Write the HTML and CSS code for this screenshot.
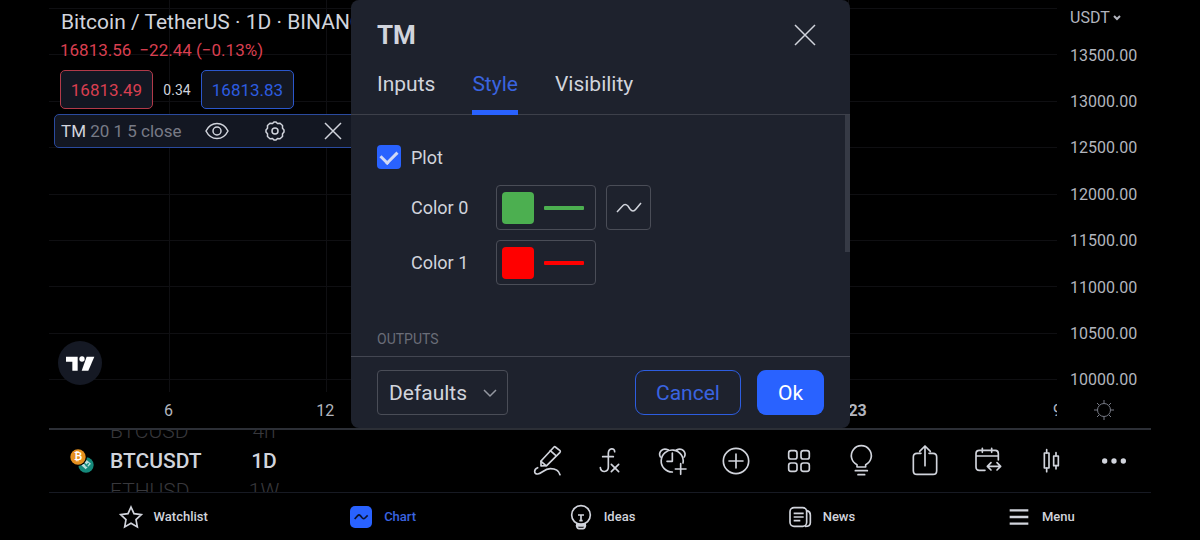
FILE: index.html
```html
<!DOCTYPE html>
<html lang="en">
<head>
    <meta charset="UTF-8">
    <meta name="viewport" content="width=device-width, initial-scale=1.0">
    <title>BTCUSDT Chart</title>
    <link rel="stylesheet" href="styles.css">
</head>
<body>
    <div class="app">
        <main class="chart">
            <div class="plot">
                <div class="grid-cols"><i></i><i></i><i></i><i></i><i class="month-end"></i><i class="month-start"></i></div>
                <div class="grid-rows"><i></i><i></i><i></i><i></i><i></i><i></i><i></i><i></i></div>

                <div class="legend">
                    <div class="symbol-title">Bitcoin / TetherUS · 1D · BINANCE</div>
                    <div class="last-price"><span>16813.56</span><span>−22.44 (−0.13%)</span></div>
                    <div class="trade">
                        <button class="trade-btn sell">16813.49</button>
                        <span class="spread">0.34</span>
                        <button class="trade-btn buy">16813.83</button>
                    </div>
                    <div class="indicator">
                        <span class="indicator-name">TM <span class="indicator-args">20 1 5 close</span></span>
                        <button class="indicator-btn" aria-label="Hide">
                            <svg width="24" height="24" viewBox="0 0 24 24"><path d="M1 12C6 2 18 2 23 12C18 22 6 22 1 12Z"/><circle cx="12" cy="12" r="4"/></svg>
                        </button>
                        <button class="indicator-btn" aria-label="Settings">
                            <svg width="24" height="24" viewBox="0 0 24 24"><path d="M9.5 4.5L11 3H13L14.5 4.5L17 4.3L19.5 6.500L19.500 9.200L21 11V13L19.500 14.800L19.500 17.500L17 19.700L14.500 19.500L13 21H11L9.500 19.500L7 19.700L4.500 17.500L4.500 14.800L3 13V11L4.500 9.200L4.500 6.500L7 4.300Z"/><circle cx="12" cy="12" r="3"/></svg>
                        </button>
                        <button class="indicator-btn" aria-label="Remove">
                            <svg width="24" height="24" viewBox="0 0 24 24"><path d="M4 4L20 20M20 4L4 20"/></svg>
                        </button>
                    </div>
                </div>

                <svg class="brand" viewBox="0 0 132 132" aria-label="TradingView">
                    <circle cx="66" cy="66" r="66" fill="#151924"/>
                    <path d="M24 47H59V89H43V62H24Z" fill="#fff"/>
                    <circle cx="72" cy="54" r="8" fill="#fff"/>
                    <path d="M86 47H109L91 89H71Z" fill="#fff"/>
                </svg>
            </div>

            <div class="price-axis">
                <div class="currency">
                    <select class="currency-select" aria-label="Currency"><option>USDT</option></select>
                    <svg width="8" height="6" viewBox="0 0 8 6"><path d="M1 1L4 4L7 1"/></svg>
                </div>
                <div class="prices">
                    <span>13500.00</span>
                    <span>13000.00</span>
                    <span>12500.00</span>
                    <span>12000.00</span>
                    <span>11500.00</span>
                    <span>11000.00</span>
                    <span>10500.00</span>
                    <span>10000.00</span>
                </div>
            </div>

            <div class="time-axis">
                <div class="dates">
                    <span>6</span><span>12</span><span></span><span></span><span class="year">2023</span><span>9</span>
                </div>
            </div>
            <button class="axis-settings" aria-label="Chart settings">
                <svg width="20" height="20" viewBox="0 0 20 20"><circle cx="10" cy="10" r="6.500"/><path d="M10 0V3M10 17V20M0 10H3M17 10H20M3 3L5 5M15 15L17 17M17 3L15 5M5 15L3 17"/></svg>
            </button>

            <section class="dialog" role="dialog" aria-label="TM">
                <header class="dialog-header">
                    <h1>TM</h1>
                    <button class="close-btn" aria-label="Close">
                        <svg width="22" height="22" viewBox="0 0 22 22"><path d="M1 1L21 21M21 1L1 21"/></svg>
                    </button>
                </header>
                <nav class="tabs">
                    <button class="tab">Inputs</button>
                    <button class="tab active">Style</button>
                    <button class="tab">Visibility</button>
                </nav>
                <div class="dialog-body">
                    <label class="plot-toggle"><input type="checkbox" class="checkbox" checked>Plot</label>
                    <div class="option">
                        <label for="color0">Color 0</label>
                        <button id="color0" class="color-btn green"><i class="swatch"></i><i class="line"></i></button>
                        <button class="line-type" aria-label="Line type">
                            <svg width="26" height="12" viewBox="0 0 26 12"><path d="M1 10L6.500 4Q9 1 12 4L14 7Q17 11 20 7L25 1"/></svg>
                        </button>
                    </div>
                    <div class="option">
                        <label for="color1">Color 1</label>
                        <button id="color1" class="color-btn red"><i class="swatch"></i><i class="line"></i></button>
                    </div>
                    <h2>OUTPUTS</h2>
                    <div class="scrollbar"></div>
                </div>
                <footer class="dialog-footer">
                    <div class="defaults">
                        <select class="defaults-select" aria-label="Defaults"><option>Defaults</option></select>
                        <svg width="14" height="8" viewBox="0 0 14 8"><path d="M1 1L7 7L13 1"/></svg>
                    </div>
                    <button class="btn cancel">Cancel</button>
                    <button class="btn ok">Ok</button>
                </footer>
            </section>
        </main>

        <div class="toolbar">
            <svg class="coin" viewBox="0 0 72 72">
                <circle cx="48" cy="48" r="23" fill="#15897b"/>
                <path d="M34 49L50 33L63 44L47 61Z" fill="#b9dfdc"/>
                <path d="M43 43L53 53M47 52L56 43" stroke="#15897b" stroke-width="4"/>
                <circle cx="24" cy="24" r="27" fill="#000"/>
                <circle cx="24" cy="24" r="23" fill="#e5901f"/>
                <text x="24" y="34" class="coin-sign">₿</text>
            </svg>
            <div class="picker symbols">
                <span>BTCUSD</span>
                <strong>BTCUSDT</strong>
                <span>ETHUSD</span>
            </div>
            <div class="picker intervals">
                <span>4h</span>
                <strong>1D</strong>
                <span>1W</span>
            </div>
            <div class="tools">
                <button aria-label="Draw">
                    <svg viewBox="0 0 96 96"><path d="M30 63V48L69 6Q71 4 73 6L87 17Q89 19 87 22L47 62Z"/><path d="M58 17L74 31M30 49L45 62M20 68C8 72 8 88 20 87C32 86 40 71 58 71C72 71 84 78 87 89"/></svg>
                </button>
                <button aria-label="Indicators">
                    <svg viewBox="0 0 96 96"><path d="M62 20C62 8 44 8 43 24V66C43 83 20 84 19 68M26 35H58M52 58L74 80M74 58L52 80"/></svg>
                </button>
                <button aria-label="Alert">
                    <svg viewBox="0 0 96 96"><path d="M78 54A33 33 0 1 0 46 81M10 36C3 22 16 6 34 15M82 36C89 22 76 6 58 15M46 24V49H30M71 56V88M55 72H87"/></svg>
                </button>
                <button aria-label="Add">
                    <svg viewBox="0 0 96 96"><circle cx="48" cy="48" r="38"/><path d="M48 27V69M27 48H69"/></svg>
                </button>
                <button aria-label="Layout">
                    <svg viewBox="0 0 96 96"><rect x="17" y="17" width="25" height="25" rx="7"/><rect x="54" y="17" width="25" height="25" rx="7"/><rect x="17" y="54" width="25" height="25" rx="7"/><rect x="54" y="54" width="25" height="25" rx="7"/></svg>
                </button>
                <button aria-label="Publish idea">
                    <svg viewBox="0 0 96 96"><path d="M33 66V59A30 30 0 1 1 59 59V66ZM28 77H64M36 89H56"/></svg>
                </button>
                <button aria-label="Share">
                    <svg viewBox="0 0 96 96"><path d="M36 25H24Q13 25 13 36V77Q13 88 24 88H72Q83 88 83 77V36Q83 25 72 25H60M48 62V4M32 19L48 3L64 19"/></svg>
                </button>
                <button aria-label="Go to date">
                    <svg viewBox="0 0 96 96"><path d="M39 76H22Q12 76 12 66V26Q12 16 22 16H70Q79 16 79 26V45M12 33H79M31 10V22M59 10V22M46 64H86M57 53L46 64L57 75M75 53L86 64L75 75"/></svg>
                </button>
                <button aria-label="Candles">
                    <svg viewBox="0 0 96 96"><rect x="28" y="24" width="14" height="45"/><rect x="56" y="33" width="14" height="29"/><path d="M35 14V24M35 69V80M63 23V33M63 62V72"/></svg>
                </button>
                <button aria-label="More">
                    <svg viewBox="0 0 96 96"><g class="solid"><circle cx="20" cy="48" r="8"/><circle cx="48" cy="48" r="8"/><circle cx="76" cy="48" r="8"/></g></svg>
                </button>
            </div>
        </div>

        <nav class="bottom-nav">
            <a href="#">
                <svg viewBox="0 0 66 66"><path d="M33 3L42 23L64 26L48 41L52 63L33 52L14 63L18 41L2 26L24 23Z"/></svg>
                Watchlist
            </a>
            <a href="#" class="current">
                <svg viewBox="0 0 66 66"><rect x="0" y="0" width="66" height="66" rx="15" fill="#2962ff" stroke="none"/><path d="M14 39L23 29Q27 25 31 29L37 36Q41 40 45 36L53 28" stroke="#0b1433"/></svg>
                Chart
            </a>
            <a href="#">
                <svg viewBox="0 0 66 66"><circle cx="33" cy="27" r="28"/><path d="M18 55H48M20 60Q22 68 27 68H39Q44 68 46 60ZM24 27H42M33 27V44M28 44H38"/></svg>
                Ideas
            </a>
            <a href="#">
                <svg viewBox="0 0 66 66"><rect x="3" y="5" width="50" height="56" rx="12"/><path d="M54 14Q64 17 64 27V50Q64 61 48 61M14 22H44M14 33H44M14 44H34"/></svg>
                News
            </a>
            <a href="#">
                <svg viewBox="0 0 66 66"><path d="M5 13H61M5 33H61M5 53H61" stroke-width="7"/></svg>
                Menu
            </a>
        </nav>
    </div>
</body>
</html>
```

FILE: styles.css
```css
* {
    box-sizing: border-box;
}

body {
    margin: 0;
    background: #000;
    color: #d1d4dc;
    font-family: Roboto, sans-serif;
    font-size: 16px;
}

button,
select {
    margin: 0;
    padding: 0;
    border: none;
    background: none;
    color: inherit;
    font: inherit;
    cursor: pointer;
}

select {
    appearance: none;
}

svg {
    display: block;
    overflow: visible;
    fill: none;
    stroke: currentColor;
    flex-shrink: 0;
}

.app {
    display: flex;
    flex-direction: column;
    height: 100vh;
    padding: 0 49px;
    overflow: hidden;
}

/* chart */
.chart {
    position: relative;
    flex: 1;
    min-height: 0;
    display: grid;
    grid-template-columns: 1fr 94px;
    grid-template-rows: 1fr 36px;
}

.plot {
    position: relative;
    display: flex;
    flex-direction: column;
    justify-content: space-between;
    min-width: 0;
    overflow: hidden;
}

.grid-cols,
.grid-rows {
    position: absolute;
    inset: 0;
    display: flex;
}

.grid-cols {
    padding-left: 120px;
}

.grid-cols i {
    flex: 6;
    border-left: 1px solid #0f0f12;
}

.grid-cols .month-end {
    flex: 2;
}

.grid-cols .month-start {
    flex: 8;
}

.grid-rows {
    flex-direction: column;
    padding: 8px 0 12px;
}

.grid-rows i {
    flex: 1;
    border-bottom: 1px solid #0f0f12;
}

.grid-rows i:first-child {
    border-top: 1px solid #0f0f12;
}

.legend {
    position: relative;
    padding: 8px 0 0 5px;
    white-space: nowrap;
}

.symbol-title {
    padding-left: 7px;
    font-size: 21px;
    line-height: 28px;
}

.last-price {
    display: flex;
    gap: 8px;
    padding-left: 6px;
    color: #d93f50;
    font-size: 17px;
    line-height: 28px;
}

.trade {
    display: flex;
    align-items: center;
    padding: 6px 0 5px 6px;
}

.trade-btn {
    width: 93px;
    height: 39px;
    border: 1px solid;
    border-radius: 5px;
    background: #131722;
    font-size: 17px;
}

.sell {
    border-color: #b23a49;
    color: #d93f50;
}

.buy {
    border-color: #2b57cc;
    color: #2d5de0;
}

.spread {
    width: 48px;
    text-align: center;
    font-size: 14px;
}

.indicator {
    display: flex;
    align-items: center;
    width: 320px;
    height: 34px;
    padding-left: 6px;
    border: 1px solid #2a4a9e;
    border-radius: 5px;
    background: #131722;
    font-size: 17px;
}

.indicator-name {
    margin-right: 6px;
}

.indicator-args {
    color: #787b86;
}

.indicator-btn {
    display: flex;
    justify-content: center;
    width: 58px;
}

.brand {
    position: relative;
    width: 44px;
    height: 44px;
    margin: 0 0 7px 9px;
    stroke: none;
}

.price-axis {
    display: flex;
    flex-direction: column;
    padding-left: 13px;
    color: #b2b5be;
}

.currency {
    display: flex;
    align-items: center;
    gap: 3px;
    height: 32px;
    padding-top: 3px;
}

.currency svg {
    stroke-width: 2;
}

.prices {
    flex: 1;
    display: flex;
    flex-direction: column;
    margin-bottom: -11px;
}

.prices span {
    flex: 1;
    display: flex;
    align-items: center;
}

.time-axis {
    overflow: hidden;
    color: #b2b5be;
}

/* one flex unit is one day */
.dates {
    display: flex;
    height: 100%;
    align-items: center;
    margin-right: -79px;
    padding-left: 41px;
}

.dates span {
    flex: 6 1 0;
    text-align: center;
}

.dates .year {
    flex-grow: 10;
    font-weight: 700;
}

.axis-settings {
    display: flex;
    align-items: center;
    justify-content: center;
    color: #787b86;
}

/* dialog */
.dialog {
    position: absolute;
    top: 0;
    bottom: 0;
    left: calc(50% - 249px);
    display: flex;
    flex-direction: column;
    width: 499px;
    border-radius: 8px;
    background: #1e222d;
}

.dialog-header {
    display: flex;
    align-items: center;
    justify-content: space-between;
    height: 70px;
    padding: 0 34px 0 26px;
}

.dialog-header h1 {
    margin: 0;
    font-size: 26px;
    font-weight: 700;
}

.tabs {
    display: flex;
    gap: 37px;
    height: 45px;
    padding: 0 26px;
    border-bottom: 1px solid #3d404a;
}

.tab {
    height: 45px;
    padding-bottom: 12px;
    border-bottom: 5px solid transparent;
    font-size: 21px;
    line-height: 28px;
}

.tab.active {
    border-color: #2962ff;
    color: #3a64e0;
}

.dialog-body {
    position: relative;
    flex: 1;
    min-height: 0;
    overflow: hidden;
    padding: 30px 26px 0;
    font-size: 18px;
}

.plot-toggle {
    display: flex;
    align-items: center;
    gap: 10px;
    height: 24px;
    margin-bottom: 16px;
}

.checkbox {
    appearance: none;
    display: flex;
    align-items: center;
    justify-content: center;
    width: 24px;
    height: 24px;
    margin: 0;
    border-radius: 4px;
    background: #2962ff;
}

.checkbox:checked::before {
    content: "";
    width: 13px;
    height: 8px;
    margin-bottom: 4px;
    border: solid #d1d9f5;
    border-width: 0 0 3px 3px;
    transform: rotate(-45deg);
}

.option {
    display: flex;
    align-items: center;
    gap: 10px;
    margin-bottom: 10px;
    padding-left: 34px;
}

.option label {
    width: 75px;
}

.color-btn,
.line-type {
    display: flex;
    align-items: center;
    height: 45px;
    border: 1px solid #4a4d57;
    border-radius: 4px;
}

.color-btn {
    gap: 10px;
    width: 100px;
    padding: 0 5px;
}

.line-type {
    justify-content: center;
    width: 45px;
}

.line-type svg {
    stroke-width: 1.5;
}

.swatch {
    width: 32px;
    height: 32px;
    border-radius: 4px;
}

.line {
    width: 40px;
    height: 4px;
    border-radius: 1px;
}

.green i {
    background: #4caf50;
}

.red i {
    background: #ff0000;
}

.dialog-body h2 {
    margin: 44px 0 0;
    color: #6a6d78;
    font-size: 14px;
    font-weight: 400;
    line-height: 20px;
}

.scrollbar {
    position: absolute;
    top: 0;
    right: 0;
    width: 5px;
    height: 137px;
    background: #363a45;
}

.dialog-footer {
    display: flex;
    align-items: center;
    height: 72px;
    padding: 0 26px;
    border-top: 1px solid #434651;
    font-size: 21px;
}

.defaults {
    position: relative;
    margin-right: auto;
}

.defaults-select {
    width: 131px;
    height: 45px;
    padding-left: 11px;
    border: 1px solid #4a4d57;
    border-radius: 4px;
}

.defaults svg {
    position: absolute;
    top: 19px;
    right: 11px;
    color: #9598a1;
    stroke-width: 1.5;
    pointer-events: none;
}

.close-btn svg,
.indicator-btn svg {
    stroke-width: 1.5;
}

.btn {
    height: 45px;
    border-radius: 9px;
}

.cancel {
    width: 106px;
    margin-right: 16px;
    border: 1px solid #2d5de0;
    color: #3a64e0;
}

.ok {
    width: 67px;
    background: #2962ff;
    color: #fff;
}

/* toolbar */
.toolbar {
    display: flex;
    align-items: center;
    height: 65px;
    padding: 0 6px 0 21px;
    border-top: 2px solid #2c2f36;
    border-bottom: 1px solid #171a23;
}

.coin {
    width: 24px;
    height: 24px;
    stroke: none;
}

.coin-sign {
    fill: #fff;
    font-size: 30px;
    font-weight: 700;
    text-anchor: middle;
}

.picker {
    display: flex;
    flex-direction: column;
    justify-content: center;
    height: 100%;
    overflow: hidden;
    font-size: 21px;
    line-height: 30px;
}

.picker span {
    color: #38383c;
    font-weight: 300;
}

.picker strong {
    font-weight: 500;
}

.symbols {
    width: 120px;
    margin-left: 16px;
}

.intervals {
    width: 68px;
    text-align: center;
}

.tools {
    display: flex;
    margin-left: auto;
}

.tools button {
    display: flex;
    justify-content: center;
    width: 63px;
}

.tools svg {
    width: 32px;
    height: 32px;
    stroke-width: 5;
    stroke-linecap: round;
    stroke-linejoin: round;
}

.solid {
    fill: currentColor;
    stroke: none;
}

/* bottom navigation */
.bottom-nav {
    display: flex;
    height: 47px;
    padding-left: 5px;
    font-size: 13px;
    font-weight: 500;
}

.bottom-nav a {
    flex: 1;
    display: flex;
    align-items: center;
    justify-content: center;
    gap: 12px;
    color: #d1d4dc;
    text-decoration: none;
}

.bottom-nav svg {
    width: 22px;
    height: 22px;
    stroke-width: 5;
}

.bottom-nav .current {
    color: #3a64e0;
}
```
